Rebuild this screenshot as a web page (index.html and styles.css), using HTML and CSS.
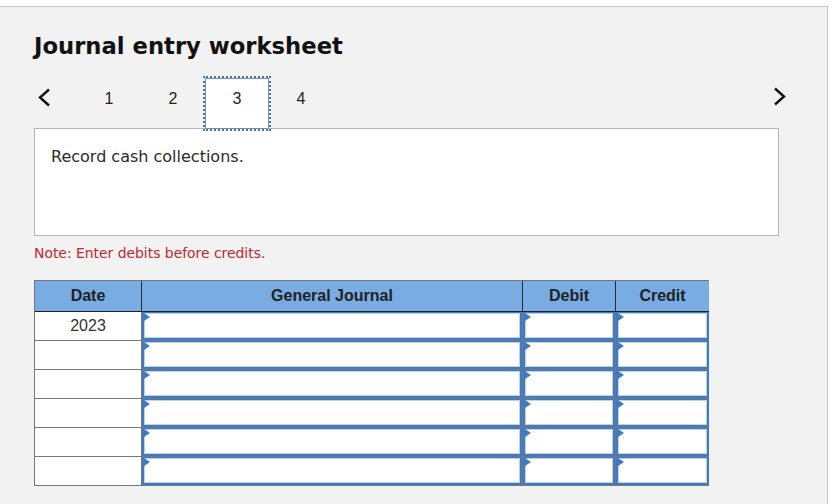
FILE: index.html
```html
<!DOCTYPE html>
<html lang="en">
<head>
<meta charset="utf-8">
<title>Journal entry worksheet</title>
<link rel="stylesheet" href="styles.css">
</head>
<body>
<div class="panel">
  <h1 class="title">Journal entry worksheet</h1>
  <div class="nav">
    <div class="nav-prev">
      <svg width="14" height="19" viewBox="0 0 14 19"><polyline points="12,1.5 3,9.5 12,17.5" fill="none" stroke="#111" stroke-width="2.4"/></svg>
    </div>
    <div class="tab">1</div>
    <div class="tab">2</div>
    <div class="tab tab-active">3</div>
    <div class="tab">4</div>
    <div class="nav-next">
      <svg width="14" height="19" viewBox="0 0 14 19"><polyline points="2,1.5 11,9.5 2,17.5" fill="none" stroke="#111" stroke-width="2.4"/></svg>
    </div>
  </div>
  <div class="prompt">Record cash collections.</div>
  <p class="note">Note: Enter debits before credits.</p>
  <div class="journal">
    <div class="hd">Date</div>
    <div class="hd">General Journal</div>
    <div class="hd">Debit</div>
    <div class="hd hd-last">Credit</div>

    <div class="date">2023</div>
    <div class="cell"><div class="inp"></div></div>
    <div class="cell"><div class="inp"></div></div>
    <div class="cell cell-last"><div class="inp"></div></div>

    <div class="date"></div>
    <div class="cell"><div class="inp"></div></div>
    <div class="cell"><div class="inp"></div></div>
    <div class="cell cell-last"><div class="inp"></div></div>

    <div class="date"></div>
    <div class="cell"><div class="inp"></div></div>
    <div class="cell"><div class="inp"></div></div>
    <div class="cell cell-last"><div class="inp"></div></div>

    <div class="date"></div>
    <div class="cell"><div class="inp"></div></div>
    <div class="cell"><div class="inp"></div></div>
    <div class="cell cell-last"><div class="inp"></div></div>

    <div class="date"></div>
    <div class="cell"><div class="inp"></div></div>
    <div class="cell"><div class="inp"></div></div>
    <div class="cell cell-last"><div class="inp"></div></div>

    <div class="date row-last"></div>
    <div class="cell row-last"><div class="inp"></div></div>
    <div class="cell row-last"><div class="inp"></div></div>
    <div class="cell cell-last row-last"><div class="inp"></div></div>
  </div>
</div>
</body>
</html>
```

FILE: styles.css
```css
html, body {
  margin: 0;
  padding: 0;
  background: #ffffff;
  overflow: hidden;
}

.panel {
  box-sizing: border-box;
  margin-top: 6px;
  width: 828px;
  height: 498px;
  background: #f2f2f2;
  border-top: 1px solid #c6c6c6;
  border-right: 1px solid #c6c6c6;
  padding: 25px 0 0 34px;
  font-family: "DejaVu Sans", Verdana, sans-serif;
}

.title {
  margin: 0;
  font-family: "DejaVu Sans", Verdana, sans-serif;
  font-weight: bold;
  font-size: 22.7px;
  line-height: 28px;
  color: #111;
}

.nav {
  display: flex;
  align-items: flex-start;
  height: 50px;
  margin-top: 18px;
}

.nav-prev {
  width: 43px;
  padding-left: 3px;
  box-sizing: border-box;
  margin-top: 10px;
}

.nav-prev svg, .nav-next svg {
  display: block;
}

.nav-next {
  margin-left: auto;
  margin-right: 40px;
  margin-top: 9px;
}

.tab {
  box-sizing: border-box;
  width: 64px;
  height: 51px;
  padding-top: 10px;
  text-align: center;
  font-family: "Liberation Sans", Arial, sans-serif;
  font-size: 16px;
  line-height: 20px;
  color: #222;
  border: 1px solid transparent;
}

.tab-active {
  position: relative;
  z-index: 1;
  background: #ffffff;
  border-color: #8c8c8c;
  outline: 2px dotted #3b78c2;
}

.prompt {
  box-sizing: border-box;
  width: 745px;
  height: 108px;
  background: #ffffff;
  border: 1px solid #b5b5b5;
  padding: 18px 16px 0 16px;
  font-size: 16px;
  line-height: 20px;
  color: #2a2a2a;
}

.note {
  margin: 8px 0 0 0;
  font-size: 13.9px;
  line-height: 18px;
  color: #c1272d;
}

.journal {
  display: grid;
  grid-template-columns: 107px 381px 93px 93px;
  grid-template-rows: 31px repeat(5, 29px) 28px;
  width: 675px;
  box-sizing: border-box;
  margin-top: 18px;
  border: 1px solid #777777;
  font-family: "Liberation Sans", Arial, sans-serif;
}

.hd {
  background: #78ace3;
  border-right: 1px solid #2a2a2a;
  border-bottom: 1px solid #1e1e1e;
  font-weight: bold;
  font-size: 16px;
  color: #222;
  display: flex;
  align-items: center;
  justify-content: center;
}

.hd-last {
  border-right: none;
}

.date {
  background: #ffffff;
  border-right: 1px solid #777777;
  border-bottom: 1px solid #777777;
  display: flex;
  align-items: center;
  justify-content: center;
  font-size: 16px;
  color: #333;
}

.cell {
  background: #7a7a7a;
  border-right: 1px solid #777777;
  border-bottom: 1px solid #777777;
  display: flex;
}

.cell-last {
  border-right: none;
}

.row-last {
  border-bottom: none;
}

.inp {
  position: relative;
  flex: 1;
  background: #ffffff;
  border: 2px solid #3e7bc4;
  border-top-width: 1px;
  box-shadow: inset 0 0 0 1px #bcd3ee;
}

.inp::before {
  content: "";
  position: absolute;
  left: 0;
  top: 0;
  border-top: 4px solid transparent;
  border-bottom: 4px solid transparent;
  border-left: 6px solid #3e7bc4;
}
```
